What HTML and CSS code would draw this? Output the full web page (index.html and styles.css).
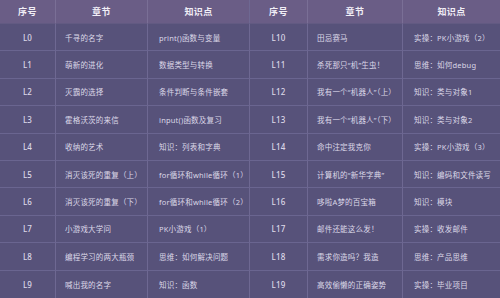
FILE: index.html
```html
<!DOCTYPE html>
<html lang="zh-CN">
<head>
<meta charset="utf-8">
<link rel="stylesheet" href="styles.css">
</head>
<body>
<div class="page">
  <div class="tbl tbl-left">
    <div class="th">序号</div><div class="th">章节</div><div class="th">知识点</div>
    <div class="td num">L0</div><div class="td ch">千寻的名字</div><div class="td kp">print()函数与变量</div>
    <div class="td num">L1</div><div class="td ch">萌新的进化</div><div class="td kp">数据类型与转换</div>
    <div class="td num">L2</div><div class="td ch">灭霸的选择</div><div class="td kp">条件判断与条件嵌套</div>
    <div class="td num">L3</div><div class="td ch">霍格沃茨的来信</div><div class="td kp">input()函数及复习</div>
    <div class="td num">L4</div><div class="td ch">收纳的艺术</div><div class="td kp">知识：列表和字典</div>
    <div class="td num">L5</div><div class="td ch">消灭该死的重复（上）</div><div class="td kp">for循环和while循环（1）</div>
    <div class="td num">L6</div><div class="td ch">消灭该死的重复（下）</div><div class="td kp">for循环和while循环（2）</div>
    <div class="td num">L7</div><div class="td ch">小游戏大学问</div><div class="td kp">PK小游戏（1）</div>
    <div class="td num">L8</div><div class="td ch">编程学习的两大瓶颈</div><div class="td kp">思维：如何解决问题</div>
    <div class="td num last">L9</div><div class="td ch last">喊出我的名字</div><div class="td kp last">知识：函数</div>
  </div>
  <div class="tbl tbl-right">
    <div class="th">序号</div><div class="th">章节</div><div class="th">知识点</div>
    <div class="td num">L10</div><div class="td ch">田忌赛马</div><div class="td kp">实操：PK小游戏（2）</div>
    <div class="td num">L11</div><div class="td ch">杀死那只“机”生虫！</div><div class="td kp">思维：如何debug</div>
    <div class="td num">L12</div><div class="td ch">我有一个“机器人”（上）</div><div class="td kp">知识：类与对象1</div>
    <div class="td num">L13</div><div class="td ch">我有一个“机器人”（下）</div><div class="td kp">知识：类与对象2</div>
    <div class="td num">L14</div><div class="td ch">命中注定我克你</div><div class="td kp">实操：PK小游戏（3）</div>
    <div class="td num">L15</div><div class="td ch">计算机的“新华字典”</div><div class="td kp">知识：编码和文件读写</div>
    <div class="td num">L16</div><div class="td ch">哆啦A梦的百宝箱</div><div class="td kp">知识：模块</div>
    <div class="td num">L17</div><div class="td ch">邮件还能这么发！</div><div class="td kp">实操：收发邮件</div>
    <div class="td num">L18</div><div class="td ch">需求你造吗？我造</div><div class="td kp">思维：产品思维</div>
    <div class="td num last">L19</div><div class="td ch last">高效偷懒的正确姿势</div><div class="td kp last">实操：毕业项目</div>
  </div>
</div>
</body>
</html>
```
FILE: styles.css
```css
* { box-sizing: border-box; }
html, body {
  margin: 0;
  padding: 0;
  background: #57527a;
}
body {
  width: 500px;
  height: 298px;
  overflow: hidden;
  font-family: "Noto Sans", "Noto Sans CJK SC", sans-serif;
}
.page {
  display: flex;
  width: 500px;
  height: 298px;
}
.tbl {
  width: 250px;
  height: 298px;
  display: grid;
  grid-template-rows: 24px repeat(10, 1fr);
}
.tbl-left { grid-template-columns: 56px 92px 1fr; }
.tbl-right { grid-template-columns: 58px 95px 1fr; }
.tbl-left .th:nth-child(3),
.tbl-left .kp { border-right: 1px solid #6e6892; }
.tbl-right .kp, .tbl-right .th:nth-child(3) { border-right: none; }
.th {
  background: #6a5d86;
  color: #f1eef6;
  font-family: "Noto Sans CJK SC", sans-serif;
  font-size: 9px;
  font-weight: 600;
  letter-spacing: 0.4px;
  display: flex;
  align-items: center;
  justify-content: center;
  border-right: 1px solid #7a6f96;
  border-bottom: 1px solid #625a82;
}
.td {
  display: flex;
  align-items: center;
  color: #dcd8e8;
  font-size: 7.5px;
  letter-spacing: 0.2px;
  white-space: nowrap;
  border-right: 1px solid #6e6892;
  border-bottom: 1px solid #6a6590;
}
.td.last { border-bottom: none; }
.num {
  justify-content: center;
  font-size: 8px;
  font-weight: 500;
}
.ch { padding-left: 9px; }
.kp { padding-left: 11px; }
```
